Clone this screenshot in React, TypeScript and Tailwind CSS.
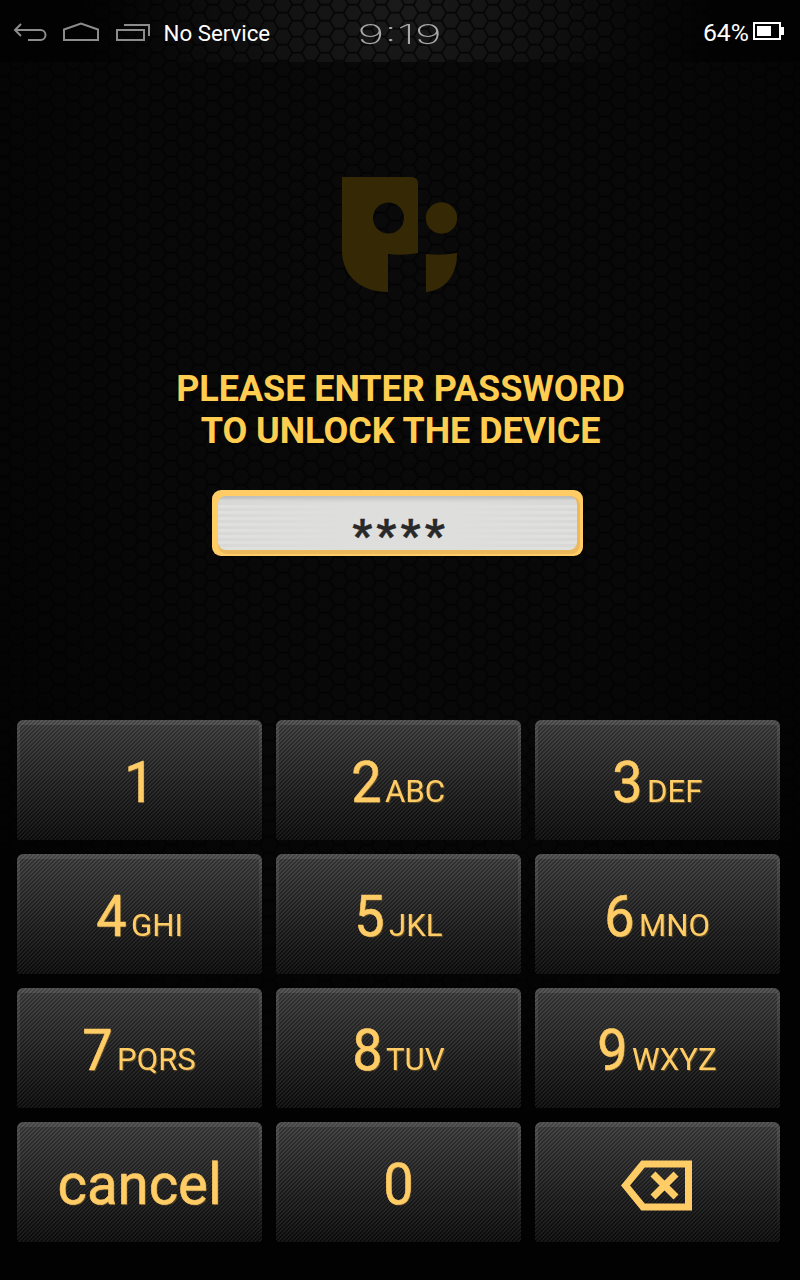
import React from "react";

type KeyProps = { digit: string; letters?: string; children?: React.ReactNode };

function Honeycomb() {
  return (
    <svg className="absolute inset-0 h-full w-full" aria-hidden="true">
      <defs>
        <pattern id="hex" width="28" height="16" patternUnits="userSpaceOnUse" x="3" y="4.7">
          <rect width="28" height="16" fill="#444" />
          <g fill="#fff">
            <path d="M5.700 8 9.800 1H18.200L22.300 8 18.200 15H9.800Z" />
            <path d="M-8.300 0-4.200-7H4.200L8.300 0 4.200 7H-4.200Z" />
            <path d="M-8.300 16-4.200 9H4.200L8.300 16 4.200 23H-4.200Z" />
            <path d="M19.700 0 23.800-7H32.200L36.300 0 32.200 7H23.800Z" />
            <path d="M19.700 16 23.800 9H32.200L36.300 16 32.200 23H23.800Z" />
          </g>
        </pattern>
        <radialGradient id="barLight" gradientUnits="userSpaceOnUse" cx="400" cy="10" r="320">
          <stop offset="0" stopColor="#1a1a1a" />
          <stop offset=".5" stopColor="#0f0f0f" />
          <stop offset="1" stopColor="#020202" />
        </radialGradient>
        <radialGradient id="pageLight" cx=".5" cy=".2" r=".7">
          <stop offset="0" stopColor="#0a0a0a" />
          <stop offset=".5" stopColor="#080808" />
          <stop offset="1" stopColor="#020202" />
        </radialGradient>
        <mask id="cells">
          <rect width="800" height="1280" fill="url(#hex)" />
        </mask>
      </defs>
      <rect width="800" height="1280" fill="#020202" />
      <g mask="url(#cells)">
        <rect y="62" width="800" height="1218" fill="url(#pageLight)" />
        <rect width="800" height="62" fill="url(#barLight)" />
      </g>
    </svg>
  );
}

function digitClass(digit: string, letters?: string) {
  if (letters) return "-ml-px mr-px origin-right scale-x-[0.93]";
  if (digit === "cancel") return "scale-x-[0.97]";
  return "-ml-px scale-x-[0.93]";
}

function Key({ digit, letters, children }: KeyProps) {
  return (
    <button
      aria-label={digit}
      className="relative h-[120px] w-[245px] overflow-hidden rounded-t-[6px] rounded-b-[3px] bg-linear-to-b from-[#3c3c3c] to-[#0b0b0b] text-[#ffcc66]"
    >
      <span className="absolute inset-0 rounded-t-[6px] border-x-[3px] border-t-[5px] border-white/10 mask-b-from-0% mask-b-to-100%" />
      <span className="absolute inset-0 bg-[linear-gradient(135deg,rgba(255,255,255,0.06)_25%,rgba(0,0,0,0.14)_25%,rgba(0,0,0,0.14)_50%,rgba(255,255,255,0.06)_50%,rgba(255,255,255,0.06)_75%,rgba(0,0,0,0.14)_75%)] bg-[size:4px_4px]" />
      <span className="relative flex h-full items-baseline justify-center gap-[3px] pt-[28px] [text-shadow:1px_1px_1px_rgba(150,115,50,0.6)]">
        {children ?? (
          <>
            <span
              className={
                "text-[58px] leading-[68px] [-webkit-text-stroke:0.6px_#ffcc66] " + digitClass(digit, letters)
              }
            >
              {digit}
            </span>
            {letters && <span className="origin-left scale-x-[0.975] text-[32px] leading-[38px]">{letters}</span>}
          </>
        )}
      </span>
    </button>
  );
}

const keys: KeyProps[] = [
  { digit: "1" },
  { digit: "2", letters: "ABC" },
  { digit: "3", letters: "DEF" },
  { digit: "4", letters: "GHI" },
  { digit: "5", letters: "JKL" },
  { digit: "6", letters: "MNO" },
  { digit: "7", letters: "PQRS" },
  { digit: "8", letters: "TUV" },
  { digit: "9", letters: "WXYZ" },
  { digit: "cancel" },
  { digit: "0" },
];

export default function App() {
  return (
    <main className="relative h-[1280px] w-[800px] overflow-hidden bg-black font-['Roboto',sans-serif]">
      <Honeycomb />
      <div className="relative flex h-full flex-col">
        <header className="grid h-[62px] grid-cols-3 items-center text-white">
          <div className="flex h-full items-center pt-[3px] pl-[13px]">
            <svg className="mt-px shrink-0" width="138" height="24" viewBox="0 0 138 24" fill="none" stroke="#8c8c8c" strokeWidth="2">
              <path d="M8 3 2 9l6 6M2 9h25.500a5 5 0 0 1 0 10H15" />
              <path d="M51 19V8.500L68 2.500 85 8.500V19Z" />
              <path d="M104 9h27v10h-27ZM111 4h25v11" />
            </svg>
            <span className="ml-[12.500px] whitespace-nowrap text-[22.300px] leading-[26px]">No Service</span>
          </div>
          <div className="flex justify-center pt-[7px]">
            <span className="scale-x-[1.720] font-['Inter',sans-serif] text-[27px] leading-[32px] font-extralight text-[#a8a8a8]">
              9:19
            </span>
          </div>
          <div className="flex items-center justify-end gap-[4px] pr-[16px]">
            <span className="pt-[3px] text-[24.800px] leading-[30px]">64%</span>
            <svg width="31" height="18" viewBox="0 0 31 18">
              <path d="M1 1h26v16H1Z" fill="none" stroke="#fff" strokeWidth="2" />
              <path d="M4 4h14v10H4ZM28 5h3v8h-3Z" fill="#fff" />
            </svg>
          </div>
        </header>

        <section className="flex flex-col items-center pt-[115px]">
          <svg width="116" height="116" viewBox="0 0 116 116" fill="#352905">
            <path
              fillRule="evenodd"
              d="M0 0H69Q76 0 76 7V76Q61 79 46 77V115C18 115 0 98 0 73ZM62 41A15.500 15.500 0 1 0 31 41A15.500 15.500 0 1 0 62 41Z"
            />
            <circle cx="99.500" cy="41" r="15.700" />
            <path d="M84 77Q99.500 79 115 76C115 99 103 113 84 115Z" />
          </svg>
          <h1 className="mt-[75px] ml-px text-center text-[36px] leading-[42px] font-bold tracking-[-0.050px] whitespace-nowrap text-[#ffcd50]">
            PLEASE ENTER PASSWORD
            <br />
            TO UNLOCK THE DEVICE
          </h1>
          <div className="mt-[38px] mr-[5px] h-[66px] w-[371px] rounded-[9px] bg-[#ffcc66] px-[6px] pt-[6px] pb-[2px]">
            <div className="h-[58px] w-[362px] rounded-[9px] bg-[#edb95d] pr-[3px] pb-[4px]">
              <div className="flex h-[54px] items-start justify-center rounded-[8px] bg-[linear-gradient(to_bottom,rgba(0,0,0,0.13),transparent_7px),linear-gradient(to_right,transparent,#dededc_35%,#dededc_65%,transparent),repeating-linear-gradient(to_bottom,#d8d8d7_0px,#d8d8d7_3px,#e0e0de_3px,#e0e0de_6px)]">
                <span className="pt-[18px] pl-[6px] text-[44px] leading-[44px] font-bold tracking-[4.200px] text-[#292929] [-webkit-text-stroke:0.4px_#292929]">
                  ****
                </span>
              </div>
            </div>
          </div>
        </section>

        <section className="mt-[164px] ml-[17px] grid grid-cols-[245px_245px_245px] gap-[14px]">
          {keys.map((key) => (
            <Key key={key.digit} {...key} />
          ))}
          <Key digit="Delete">
            <svg className="mt-[10px] -ml-px" width="72" height="51" viewBox="0 0 72 51" fill="none" stroke="#ffcc66">
              <path d="M22 4H67.500V47H22L4.500 25.500Z" strokeWidth="7" />
              <path d="m32 14 23 23m0-23L32 37" strokeWidth="7" />
            </svg>
          </Key>
        </section>
      </div>
    </main>
  );
}
